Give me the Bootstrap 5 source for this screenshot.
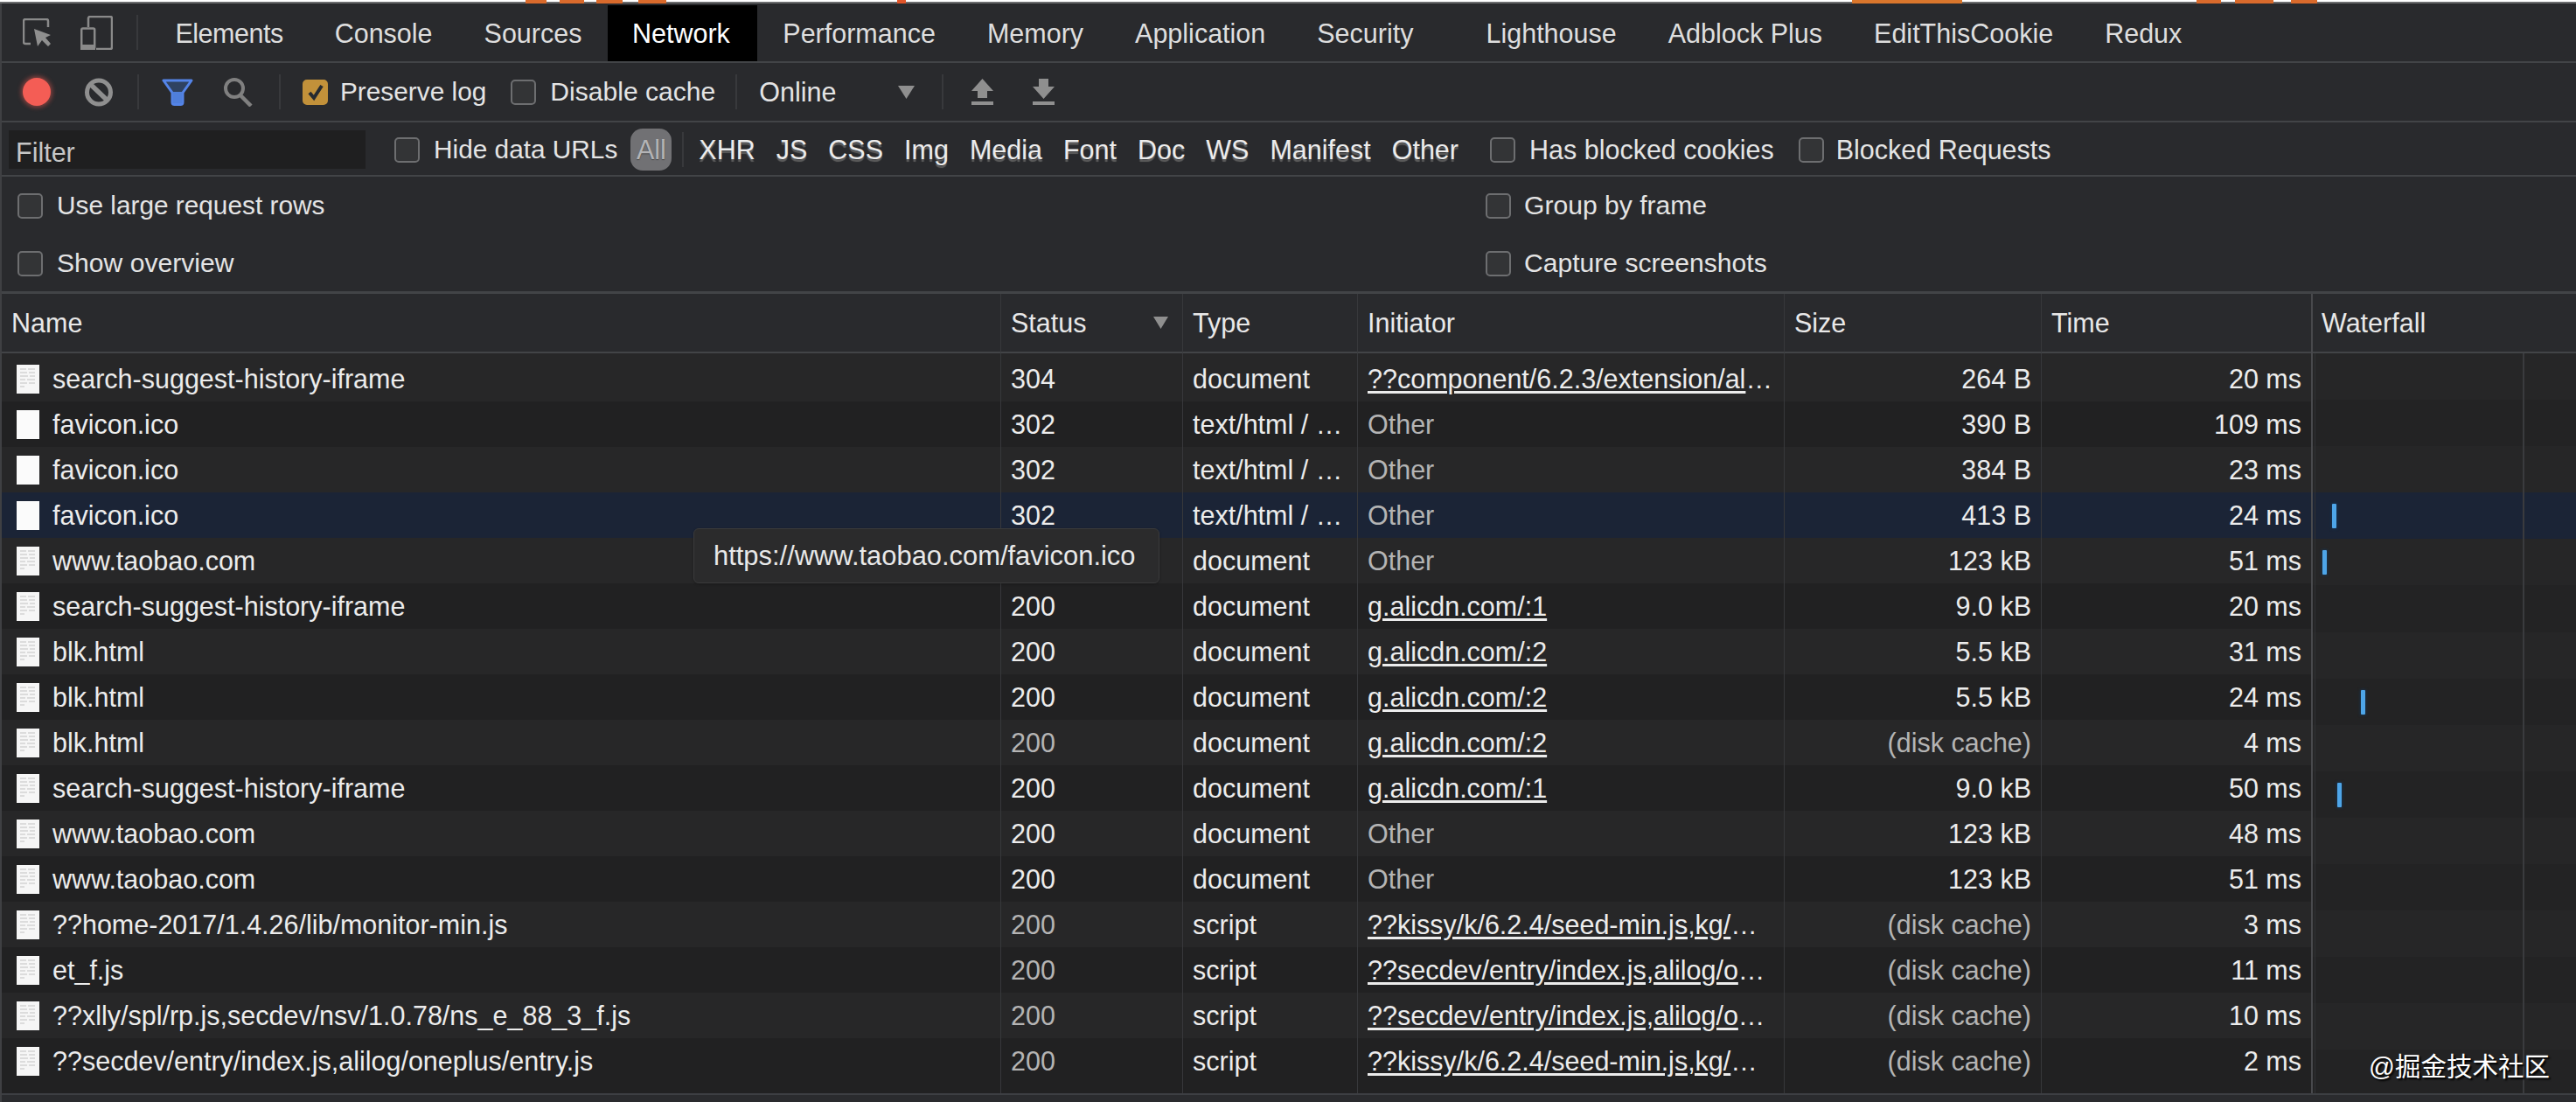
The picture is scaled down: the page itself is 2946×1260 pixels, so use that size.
<!DOCTYPE html>
<html lang="en">
<head>
<meta charset="utf-8">
<title>DevTools Network</title>
<link href="https://cdn.jsdelivr.net/npm/bootstrap@5.3.0/dist/css/bootstrap.min.css" rel="stylesheet">
<style>
html,body{margin:0;padding:0;width:2946px;height:1260px;overflow:hidden;background:#292a2d}
body{font-family:"Liberation Sans",Arial,sans-serif;font-size:30.5px;line-height:36px;color:#e6e6e6;position:relative}
.topstrip{height:4px;background:
 linear-gradient(90deg,transparent 601px,#d96a2c 601px,#d96a2c 625px,transparent 625px,transparent 640px,#d96a2c 640px,#d96a2c 668px,transparent 668px,transparent 682px,#d96a2c 682px,#d96a2c 712px,transparent 712px,transparent 730px,#d96a2c 730px,#d96a2c 762px,transparent 762px,transparent 1026px,#e0552a 1026px,#e0552a 1036px,transparent 1036px,transparent 2118px,#d9762c 2118px,#d9762c 2244px,transparent 2244px,transparent 2512px,#d96a2c 2512px,#d96a2c 2540px,transparent 2540px,transparent 2556px,#d96a2c 2556px,#d96a2c 2600px,transparent 2600px,transparent 2620px,#d96a2c 2620px,#d96a2c 2650px,transparent 2650px),
 linear-gradient(180deg,#fff 0,#fff 2px,#6b6c6e 2px,#6b6c6e 4px)}
.shell{border-left:2px solid #3f4043}
.tabbar,.toolbar,.filterbar{display:flex;align-items:center;border-bottom:2px solid #424447}
.tabbar{height:66px;box-sizing:content-box;color:#dedede}
.toolbar{height:66px;box-sizing:content-box}
.filterbar{height:58px;padding-top:2px;box-sizing:content-box}
.vsep{width:2px;height:40px;background:#38393c;flex:none}
.tabitem{padding:0 29.5px;height:64px;margin-top:2px;display:flex;align-items:center;flex:none}
.tabitem.active{background:#000;color:#fff;padding:0 31px 0 28px}
.tab-gap{margin-left:13px;letter-spacing:-.5px}
.tab-extra{margin-left:24px}
.ico{flex:none;display:block}
.recdot{width:32px;height:32px;border-radius:50%;background:#f45d55;box-shadow:0 0 5px 2px rgba(244,93,85,.45);flex:none}
.opt{display:flex;align-items:center;white-space:nowrap;flex:none;color:#e4e4e4}
.opt .form-check-input{width:29px;height:29px;margin:0;background-color:#333436;border:2px solid #6d6e70;border-radius:5px;flex:none;float:none;box-shadow:none}
.opt .form-check-input:checked{background-color:#c2913a;border-color:#c2913a;background-size:24px;background-image:url("data:image/svg+xml,%3csvg xmlns='http://www.w3.org/2000/svg' viewBox='0 0 24 24'%3e%3cpath fill='none' stroke='%23262a30' stroke-width='4' d='M5 13l5 6 9-14'/%3e%3c/svg%3e")}
.opt .form-check-label{margin-left:16px}
.opt .lab-near{margin-left:14px}
.tight{font-size:29.8px}
.tight2{font-size:30.1px}
.filterbox{width:408px;height:44px;margin-left:8px;padding:7px 8px 0;background:#1f1f20;color:#c6c6c6;flex:none}
.allpill{width:47px;height:48px;border-radius:14px;background:#717174;color:#b4b4b6;display:flex;align-items:center;justify-content:center;margin-left:15px;text-shadow:0 1px 1px #444;flex:none}
.typerow{display:flex;gap:24px;margin-left:17px;color:#ececec;text-shadow:0 3px 1px #5c5c5c;flex:none}
.m-a{margin-left:24px}.m-b{margin-left:38px}.m-c{margin-left:27px}.m-d{margin-left:26px}.m-e{margin-left:34px}.m-f{margin-left:29px}
.m-g{margin-left:25px}.m-h{margin-left:28px}.m-i{margin-left:23px}.m-j{margin-left:31px}.m-k{margin-left:32px}.m-l{margin-left:45px}
.m-n{margin-left:33px}.m-o{margin-left:12px}.m-p{margin-left:36px}.m-q{margin-left:34px}
.onlinebox{width:178px;margin-left:25px;display:flex;align-items:center;justify-content:space-between;flex:none;color:#e4e4e4}
.settingsbar{height:131px;border-bottom:3px solid #424447;box-sizing:content-box;display:flex}
.setcol-l{width:1697px;padding-left:18px}
.setrow{height:66px;display:flex;align-items:center;flex:none}
.setcol-r .form-check-label{margin-left:15px}
.netgrid{display:flex;position:relative}
.nettable{--bs-table-color:#ececec;--bs-table-bg:transparent;width:2641px;table-layout:fixed;margin:0;flex:none;border-collapse:separate;border-spacing:0}
.table.nettable>:not(caption)>*>*{padding:0 11px;background:transparent;border-bottom:0;border-right:1px solid #37383b;box-shadow:none;white-space:nowrap;overflow:hidden;vertical-align:middle;height:52px;font-weight:400;line-height:36px;color:#ececec}
.table.nettable>:not(caption)>*>*:last-child{border-right:0}
.table.nettable>thead>tr>th{height:66px;border-bottom:2px solid #424447;box-sizing:content-box;background:#292a2d;color:#e8e8e8;padding:0 11px}
.table.nettable>thead>tr>th.sortcol{padding-right:16px}
.table.nettable>tbody>tr>td:first-child{padding-left:17px}
.table.nettable>tbody>tr:nth-child(odd)>*{background:#272728}
.table.nettable>tbody>tr:nth-child(even)>*{background:#212122}
.table.nettable>tbody>tr.sel>*{background:#1b2436}
.table.nettable>tbody>tr.firstrow>*{height:55px;padding-top:3px}
.table.nettable>tbody>tr.fillrow>*{height:11px;background:#212122}
.table.nettable>tbody>tr>td.dim{color:#b4b4b4}
.sorthead{display:flex;justify-content:space-between;align-items:center}
.namecell{display:flex;align-items:center;gap:15px}
.numcell{text-align:right}
.initlink{color:#ececec;text-decoration:underline;text-underline-offset:3px}
.wfall{flex:1;position:relative;border-left:2px solid #48494c;min-width:0}
.wfhead{height:66px;padding-left:10px;display:flex;align-items:center;color:#e8e8e8;border-bottom:2px solid #424447;box-sizing:content-box;background:#292a2d}
.wfrow{height:53.1px;display:flex;align-items:flex-start}
.wfrow:nth-child(odd){background:#262627}
.wfrow:nth-child(even){background:#232324}
.wfrow.sel{background:#1b2436}
.wfbar{width:5px;height:28px;margin-top:13px;background:#4ea5e8;box-shadow:0 0 3px 1px rgba(20,60,100,.6);border-radius:1px}
.bar-a{margin-left:22px}.bar-b{margin-left:11px}.bar-c{margin-left:55px}.bar-d{margin-left:28px}
.wfbody{height:846px;overflow:hidden;position:relative}
.wfline{position:absolute;top:0;bottom:0;width:2px;background:#3a3b3e;left:240px}
.wfline2{position:absolute;top:0;bottom:0;width:1px;background:#303134;left:2px}
.footstrip{height:10px;border-top:2px solid #3d3f43;background:#2a2b2e}
.urlhint{position:absolute;left:793px;top:604px;width:533px;height:63px;background:#2b2b2c;border:1px solid #3a3a3b;border-radius:6px;padding-left:22px;display:flex;align-items:center;color:#e8e8e8;box-shadow:0 1px 3px rgba(0,0,0,.25);white-space:nowrap;font-size:30.9px}
.wmark{position:absolute;right:30px;top:1202px;font-family:"Liberation Sans","Noto Sans CJK SC",sans-serif;font-size:29.5px;line-height:36px;color:#fff;text-shadow:2px 2px 2px #000;white-space:nowrap}
</style>
</head>
<body>
<svg width="0" height="0" class="position-absolute">
<symbol id="docfile" viewBox="0 0 26 33"><rect width="26" height="33" fill="#f6f6f6"/><path d="M4 5h7M13 5h8M4 9h8M14 9h7M4 13h9M15 13h6M4 17h6M12 17h9M4 21h8M14 21h7M4 25h5" stroke="#dcdcdc" stroke-width="2"/></symbol>
<symbol id="blankfile" viewBox="0 0 26 33"><rect width="26" height="33" fill="#fbfbfb"/></symbol>
</svg>
<div class="topstrip"></div>
<div class="shell">
  <nav class="tabbar">
    <svg class="ico m-a" width="32" height="33" viewBox="0 0 32 33" fill="none"><path d="M9 29H3a2 2 0 0 1-2-2V3a2 2 0 0 1 2-2h24a2 2 0 0 1 2 2v7" stroke="#8a8a8a" stroke-width="2.5"/><path d="M13 12l19 7-6 3 6 7-3 3-7-7-5 7z" fill="#8f8f8f"/></svg>
    <svg class="ico m-q" width="37" height="39" viewBox="0 0 37 39" fill="none"><path d="M9 13V3a2 2 0 0 1 2-2h23a2 2 0 0 1 2 2v33a2 2 0 0 1-2 2H18" stroke="#8a8a8a" stroke-width="2.5"/><rect x="1.2" y="14.5" width="15" height="23" rx="1.5" stroke="#8a8a8a" stroke-width="2.5"/><rect y="33" width="17" height="6" fill="#8a8a8a"/></svg>
    <div class="vsep m-c"></div>
    <div class="tabitem tab-gap">Elements</div>
    <div class="tabitem">Console</div>
    <div class="tabitem">Sources</div>
    <div class="tabitem active">Network</div>
    <div class="tabitem">Performance</div>
    <div class="tabitem">Memory</div>
    <div class="tabitem">Application</div>
    <div class="tabitem">Security</div>
    <div class="tabitem tab-extra">Lighthouse</div>
    <div class="tabitem">Adblock Plus</div>
    <div class="tabitem">EditThisCookie</div>
    <div class="tabitem">Redux</div>
  </nav>
  <div class="toolbar">
    <div class="recdot m-a"></div>
    <svg class="ico m-b" width="34" height="33" viewBox="0 0 34 33" fill="none"><circle cx="17" cy="16.5" r="13.5" stroke="#8f8f8f" stroke-width="5"/><path d="M7 7l20 19" stroke="#8f8f8f" stroke-width="5.5"/></svg>
    <div class="vsep m-c"></div>
    <svg class="ico m-d" width="36" height="31" viewBox="0 0 36 31" fill="none"><path d="M2 2h32L24 16v11a2.500 2.500 0 0 1-2.500 2.500h-7A2.500 2.500 0 0 1 12 27V16z" fill="#2f4261" stroke="#5484e8" stroke-width="3" stroke-linejoin="round"/><path d="M12.500 15h11v13h-11z" fill="#4f7fdc"/></svg>
    <svg class="ico m-e" width="35" height="33" viewBox="0 0 35 33" fill="none"><circle cx="13" cy="12" r="10" stroke="#808080" stroke-width="4"/><path d="M20 20l12 12" stroke="#808080" stroke-width="4.500"/></svg>
    <div class="vsep m-f"></div>
    <label class="opt form-check m-g p-0 mb-0"><input class="form-check-input" type="checkbox" checked><span class="form-check-label lab-near tight">Preserve log</span></label>
    <label class="opt form-check m-h p-0 mb-0"><input class="form-check-input" type="checkbox"><span class="form-check-label tight2">Disable cache</span></label>
    <div class="vsep m-i"></div>
    <div class="onlinebox"><span>Online</span><svg class="ico" width="19" height="15" viewBox="0 0 19 15"><path d="M0 0h19L9.500 15z" fill="#8f8f8f"/></svg></div>
    <div class="vsep m-j"></div>
    <svg class="ico m-k" width="25" height="30" viewBox="0 0 25 30"><path d="M12.500 0L25 14h-7v8H7v-8H0z" fill="#8f8f8f"/><rect y="26" width="25" height="4" fill="#8f8f8f"/></svg>
    <svg class="ico m-l" width="25" height="30" viewBox="0 0 25 30"><path d="M12.500 23L0 9h7V0h11v9h7z" fill="#8f8f8f"/><rect y="26" width="25" height="4" fill="#8f8f8f"/></svg>
  </div>
  <div class="filterbar">
    <div class="filterbox">Filter</div>
    <label class="opt form-check m-n p-0 mb-0"><input class="form-check-input" type="checkbox"><span class="form-check-label tight">Hide data URLs</span></label>
    <div class="allpill">All</div>
    <div class="vsep m-o"></div>
    <div class="typerow"><span>XHR</span><span>JS</span><span>CSS</span><span>Img</span><span>Media</span><span>Font</span><span>Doc</span><span>WS</span><span>Manifest</span><span>Other</span></div>
    <label class="opt form-check m-p p-0 mb-0"><input class="form-check-input" type="checkbox"><span class="form-check-label">Has blocked cookies</span></label>
    <label class="opt form-check m-h p-0 mb-0"><input class="form-check-input" type="checkbox"><span class="form-check-label lab-near">Blocked Requests</span></label>
  </div>
  <div class="settingsbar">
    <div class="setcol-l">
      <div class="setrow"><label class="opt form-check p-0 mb-0"><input class="form-check-input" type="checkbox"><span class="form-check-label tight">Use large request rows</span></label></div>
      <div class="setrow"><label class="opt form-check p-0 mb-0"><input class="form-check-input" type="checkbox"><span class="form-check-label tight2">Show overview</span></label></div>
    </div>
    <div class="setcol-r">
      <div class="setrow"><label class="opt form-check p-0 mb-0"><input class="form-check-input" type="checkbox"><span class="form-check-label tight2">Group by frame</span></label></div>
      <div class="setrow"><label class="opt form-check p-0 mb-0"><input class="form-check-input" type="checkbox"><span class="form-check-label tight2">Capture screenshots</span></label></div>
    </div>
  </div>
  <div class="netgrid">
    <table class="table nettable">
      <colgroup><col style="width:1143px"><col style="width:208px"><col style="width:200px"><col style="width:488px"><col style="width:294px"><col style="width:308px"></colgroup>
      <thead><tr><th>Name</th><th class="sortcol"><div class="sorthead"><span>Status</span><svg class="ico" width="17" height="14" viewBox="0 0 17 14"><path d="M0 0h17L8.500 14z" fill="#8f8f8f"/></svg></div></th><th>Type</th><th>Initiator</th><th>Size</th><th>Time</th></tr></thead>
      <tbody>
        <tr class="firstrow"><td><div class="namecell"><svg class="ico" width="26" height="33"><use href="#docfile"/></svg>search-suggest-history-iframe</div></td><td>304</td><td>document</td><td><a class="initlink" href="#">??component/6.2.3/extension/al</a>…</td><td class="numcell">264 B</td><td class="numcell">20 ms</td></tr>
        <tr><td><div class="namecell"><svg class="ico" width="26" height="33"><use href="#blankfile"/></svg>favicon.ico</div></td><td>302</td><td>text/html / …</td><td class="dim">Other</td><td class="numcell">390 B</td><td class="numcell">109 ms</td></tr>
        <tr><td><div class="namecell"><svg class="ico" width="26" height="33"><use href="#blankfile"/></svg>favicon.ico</div></td><td>302</td><td>text/html / …</td><td class="dim">Other</td><td class="numcell">384 B</td><td class="numcell">23 ms</td></tr>
        <tr class="sel"><td><div class="namecell"><svg class="ico" width="26" height="33"><use href="#blankfile"/></svg>favicon.ico</div></td><td>302</td><td>text/html / …</td><td class="dim">Other</td><td class="numcell">413 B</td><td class="numcell">24 ms</td></tr>
        <tr><td><div class="namecell"><svg class="ico" width="26" height="33"><use href="#docfile"/></svg>www.taobao.com</div></td><td></td><td>document</td><td class="dim">Other</td><td class="numcell">123 kB</td><td class="numcell">51 ms</td></tr>
        <tr><td><div class="namecell"><svg class="ico" width="26" height="33"><use href="#docfile"/></svg>search-suggest-history-iframe</div></td><td>200</td><td>document</td><td><a class="initlink" href="#">g.alicdn.com/:1</a></td><td class="numcell">9.0 kB</td><td class="numcell">20 ms</td></tr>
        <tr><td><div class="namecell"><svg class="ico" width="26" height="33"><use href="#docfile"/></svg>blk.html</div></td><td>200</td><td>document</td><td><a class="initlink" href="#">g.alicdn.com/:2</a></td><td class="numcell">5.5 kB</td><td class="numcell">31 ms</td></tr>
        <tr><td><div class="namecell"><svg class="ico" width="26" height="33"><use href="#docfile"/></svg>blk.html</div></td><td>200</td><td>document</td><td><a class="initlink" href="#">g.alicdn.com/:2</a></td><td class="numcell">5.5 kB</td><td class="numcell">24 ms</td></tr>
        <tr><td><div class="namecell"><svg class="ico" width="26" height="33"><use href="#docfile"/></svg>blk.html</div></td><td class="dim">200</td><td>document</td><td><a class="initlink" href="#">g.alicdn.com/:2</a></td><td class="numcell dim">(disk cache)</td><td class="numcell">4 ms</td></tr>
        <tr><td><div class="namecell"><svg class="ico" width="26" height="33"><use href="#docfile"/></svg>search-suggest-history-iframe</div></td><td>200</td><td>document</td><td><a class="initlink" href="#">g.alicdn.com/:1</a></td><td class="numcell">9.0 kB</td><td class="numcell">50 ms</td></tr>
        <tr><td><div class="namecell"><svg class="ico" width="26" height="33"><use href="#docfile"/></svg>www.taobao.com</div></td><td>200</td><td>document</td><td class="dim">Other</td><td class="numcell">123 kB</td><td class="numcell">48 ms</td></tr>
        <tr><td><div class="namecell"><svg class="ico" width="26" height="33"><use href="#docfile"/></svg>www.taobao.com</div></td><td>200</td><td>document</td><td class="dim">Other</td><td class="numcell">123 kB</td><td class="numcell">51 ms</td></tr>
        <tr><td><div class="namecell"><svg class="ico" width="26" height="33"><use href="#docfile"/></svg>??home-2017/1.4.26/lib/monitor-min.js</div></td><td class="dim">200</td><td>script</td><td><a class="initlink" href="#">??kissy/k/6.2.4/seed-min.js,kg/</a>…</td><td class="numcell dim">(disk cache)</td><td class="numcell">3 ms</td></tr>
        <tr><td><div class="namecell"><svg class="ico" width="26" height="33"><use href="#docfile"/></svg>et_f.js</div></td><td class="dim">200</td><td>script</td><td><a class="initlink" href="#">??secdev/entry/index.js,alilog/o</a>…</td><td class="numcell dim">(disk cache)</td><td class="numcell">11 ms</td></tr>
        <tr><td><div class="namecell"><svg class="ico" width="26" height="33"><use href="#docfile"/></svg>??xlly/spl/rp.js,secdev/nsv/1.0.78/ns_e_88_3_f.js</div></td><td class="dim">200</td><td>script</td><td><a class="initlink" href="#">??secdev/entry/index.js,alilog/o</a>…</td><td class="numcell dim">(disk cache)</td><td class="numcell">10 ms</td></tr>
        <tr><td><div class="namecell"><svg class="ico" width="26" height="33"><use href="#docfile"/></svg>??secdev/entry/index.js,alilog/oneplus/entry.js</div></td><td class="dim">200</td><td>script</td><td><a class="initlink" href="#">??kissy/k/6.2.4/seed-min.js,kg/</a>…</td><td class="numcell dim">(disk cache)</td><td class="numcell">2 ms</td></tr>
        <tr class="fillrow"><td></td><td></td><td></td><td></td><td></td><td></td></tr>
      </tbody>
    </table>
    <div class="wfall">
      <div class="wfhead">Waterfall</div>
      <div class="wfbody">
        <div>
          <div class="wfrow"></div><div class="wfrow"></div><div class="wfrow"></div>
          <div class="wfrow sel"><div class="wfbar bar-a"></div></div>
          <div class="wfrow"><div class="wfbar bar-b"></div></div>
          <div class="wfrow"></div><div class="wfrow"></div>
          <div class="wfrow"><div class="wfbar bar-c"></div></div>
          <div class="wfrow"></div>
          <div class="wfrow"><div class="wfbar bar-d"></div></div>
          <div class="wfrow"></div><div class="wfrow"></div><div class="wfrow"></div><div class="wfrow"></div><div class="wfrow"></div><div class="wfrow"></div>
        </div>
        <div class="wfline"></div><div class="wfline2"></div>
      </div>
    </div>
  </div>
  <div class="footstrip"></div>
</div>
<div class="urlhint">https://www.taobao.com/favicon.ico</div>
<div class="wmark">@掘金技术社区</div>
<script src="https://cdn.jsdelivr.net/npm/bootstrap@5.3.0/dist/js/bootstrap.bundle.min.js"></script>
</body>
</html>
